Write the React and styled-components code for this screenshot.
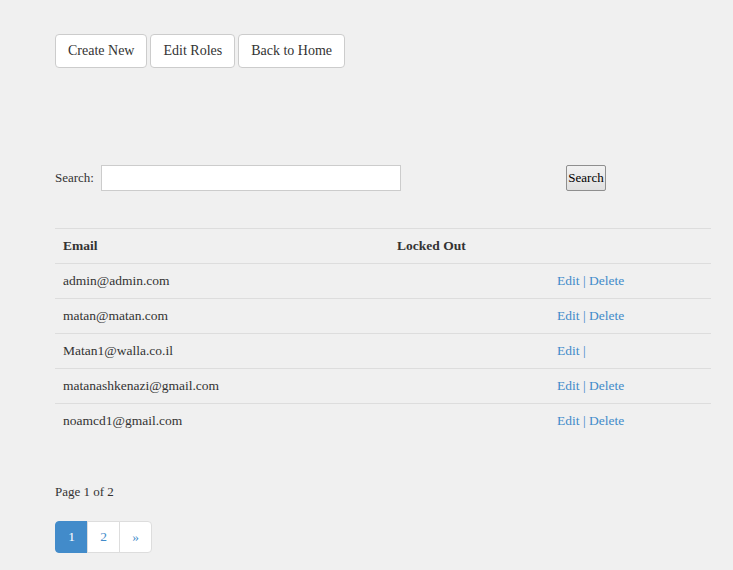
import React from "react";
import styled, { createGlobalStyle } from "styled-components";

const GlobalStyle = createGlobalStyle`
  html, body {
    margin: 0;
    background: #f0f0f0;
  }
  body {
    font-family: "Liberation Serif", "Times New Roman", serif;
    font-size: 13.5px;
    line-height: 18px;
    color: #333;
  }
  * {
    box-sizing: border-box;
  }
`;

const Page = styled.div`
  padding: 34px 22px 16px 55px;
`;

const Toolbar = styled.div`
  display: flex;
  gap: 3px;
`;

const Button = styled.a`
  display: inline-block;
  padding: 6px 12px;
  font-size: 14px;
  line-height: 20px;
  color: #333;
  background: #fff;
  border: 1px solid #ccc;
  border-radius: 4px;
  text-decoration: none;
  cursor: pointer;
`;

const SearchRow = styled.form`
  display: flex;
  align-items: center;
  margin-top: 97px;
`;

const Label = styled.label`
  font-size: 13px;
  margin-right: 7px;
`;

const SearchInput = styled.input`
  width: 300px;
  height: 26px;
  border: 1px solid #ccc;
  background: #fff;
  padding: 2px 6px;
  font: inherit;
  outline: none;
`;

const SearchButton = styled.button`
  margin-left: 165px;
  height: 26px;
  width: 40px;
  padding: 0 1px;
  font-family: "Liberation Serif", "Times New Roman", serif;
  font-size: 13px;
  color: #000;
  background: linear-gradient(#f2f2f2, #e0e0e0);
  border: 1px solid #8f8f8f;
  border-radius: 2px;
`;

const Table = styled.table`
  width: 656px;
  margin-top: 37px;
  border-collapse: collapse;
  border-spacing: 0;
`;

const Th = styled.th`
  text-align: left;
  font-weight: bold;
  padding: 8px;
  border-top: 1px solid #ddd;
  border-bottom: 1px solid #ddd;
  width: ${(p) => p.$w || "auto"};
`;

const Td = styled.td`
  padding: 8px;
  border-top: 1px solid #ddd;
`;

const Link = styled.a`
  color: #428bca;
  text-decoration: none;
`;

const Sep = styled.span`
  color: #428bca;
`;

const PageInfo = styled.p`
  font-size: 13px;
  margin: 45px 0 0;
`;

const Pager = styled.ul`
  display: inline-flex;
  list-style: none;
  padding: 0;
  margin: 20px 0 0;
`;

const PageItem = styled.li`
  a {
    display: block;
    padding: 6px 0;
    line-height: 18px;
    width: 33px;
    text-align: center;
    text-decoration: none;
    border: 1px solid ${(p) => (p.$active ? "#428bca" : "#ddd")};
    margin-left: -1px;
    background: ${(p) => (p.$active ? "#428bca" : "#fff")};
    color: ${(p) => (p.$active ? "#fff" : "#428bca")};
  }
  &:first-child a {
    margin-left: 0;
    border-radius: 4px 0 0 4px;
  }
  &:last-child a {
    border-radius: 0 4px 4px 0;
  }
`;

const users = [
  { email: "admin@admin.com", del: true },
  { email: "matan@matan.com", del: true },
  { email: "Matan1@walla.co.il", del: false },
  { email: "matanashkenazi@gmail.com", del: true },
  { email: "noamcd1@gmail.com", del: true },
];

export default function App() {
  return (
    <>
      <GlobalStyle />
      <Page>
        <Toolbar>
          <Button>Create New</Button>
          <Button>Edit Roles</Button>
          <Button>Back to Home</Button>
        </Toolbar>

        <SearchRow onSubmit={(e) => e.preventDefault()}>
          <Label>Search:</Label>
          <SearchInput type="text" />
          <SearchButton type="submit">Search</SearchButton>
        </SearchRow>

        <Table>
          <thead>
            <tr>
              <Th $w="334px">Email</Th>
              <Th $w="160px">Locked Out</Th>
              <Th></Th>
            </tr>
          </thead>
          <tbody>
            {users.map((u) => (
              <tr key={u.email}>
                <Td>{u.email}</Td>
                <Td></Td>
                <Td>
                  <Link href="#">Edit</Link> <Sep>|</Sep>{" "}
                  {u.del && <Link href="#">Delete</Link>}
                </Td>
              </tr>
            ))}
          </tbody>
        </Table>

        <PageInfo>Page 1 of 2</PageInfo>
        <Pager>
          <PageItem $active>
            <a href="#">1</a>
          </PageItem>
          <PageItem>
            <a href="#">2</a>
          </PageItem>
          <PageItem>
            <a href="#">»</a>
          </PageItem>
        </Pager>
      </Page>
    </>
  );
}
